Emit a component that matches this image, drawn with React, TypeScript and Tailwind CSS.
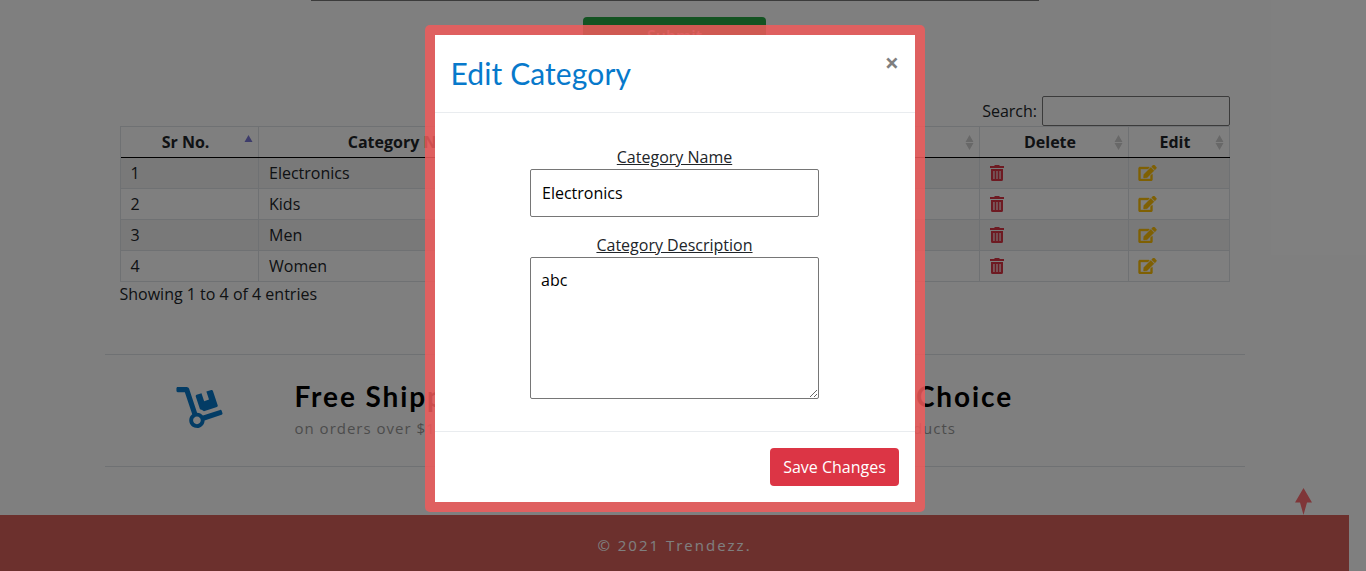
import React from "react";
import { FaDolly, FaEdit } from "react-icons/fa";

const rows = ["Electronics", "Kids", "Men", "Women"];

function TrashIcon() {
  return (
    <svg className="h-4 w-[14px]" viewBox="0 0 14 16" fill="#dc3545">
      <path d="M5 0h4l1 1h4v2H0V1h4z" />
      <path
        fillRule="evenodd"
        d="M1 4h12v10.5a1.5 1.5 0 0 1-1.5 1.5h-9A1.5 1.5 0 0 1 1 14.5zM3.4 6v8h1.1V6zM6.45 6v8h1.1V6zM9.5 6v8h1.1V6z"
      />
    </svg>
  );
}

function SortIcon({ active = false }: { active?: boolean }) {
  return (
    <svg className="h-[15px] w-[9px] shrink-0" viewBox="0 0 9 15">
      {active ? (
        <path d="M4.5 0 8.5 7h-8z" fill="#7b79d6" />
      ) : (
        <path d="M4.5 0 8.5 7h-8zM4.5 15 8.5 8h-8z" fill="#d0d0d0" />
      )}
    </svg>
  );
}

function HeaderCell({ label, active = false }: { label?: string; active?: boolean }) {
  return (
    <div className="flex items-center border-r border-[#dee2e6] pl-[6px] pr-[5px]">
      <span className="flex-1 text-center font-bold">{label}</span>
      <SortIcon active={active} />
    </div>
  );
}

const columns = "grid grid-cols-[138px_310px_411px_149px_101px]";
const cell = "flex items-center border-r border-[#dee2e6] pl-[10px]";

function CategoryTable() {
  return (
    <div className="ml-[120px] w-[1110px] border-l border-t border-[#dee2e6]">
      <div className={`${columns} h-[31px] border-b border-black`}>
        <HeaderCell label="Sr No." active />
        <HeaderCell label="Category Name" />
        <HeaderCell />
        <HeaderCell label="Delete" />
        <HeaderCell label="Edit" />
      </div>
      {rows.map((name, i) => (
        <div
          key={name}
          className={`${columns} h-[31px] border-b border-[#dee2e6] ${i % 2 === 0 ? "bg-[#f2f2f2]" : ""}`}
        >
          <div className="flex items-center border-r border-[#dee2e6] pl-[9.5px]">{i + 1}</div>
          <div className={cell}>{name}</div>
          <div className={cell} />
          <div className={cell}>
            <TrashIcon />
          </div>
          <div className="flex items-center border-r border-[#dee2e6] pl-[9px]">
            <FaEdit className="h-4 w-[19px] stroke-[#ffc107] stroke-[12] text-[#ffc107]" />
          </div>
        </div>
      ))}
    </div>
  );
}

function Page() {
  return (
    <div className="flex h-[571px] w-[1349px] flex-col text-[#212529]">
      <div className="ml-[311px] h-px w-[728px] shrink-0 bg-[#767676]" />
      <button className="ml-[583px] mt-4 h-[38px] w-[183px] shrink-0 rounded bg-[#28a745] font-semibold text-white">
        Submit
      </button>
      <div className="mt-[41px] flex h-[30px] w-[1230px] shrink-0 items-center justify-end gap-[5px]">
        <span>Search:</span>
        <input className="h-[30px] w-[188px] rounded-[2px] border border-[#767676] bg-white" />
      </div>
      <CategoryTable />
      <p className="ml-[119.5px] h-6 leading-6">Showing 1 to 4 of 4 entries</p>
      <section className="ml-[105px] mt-12 flex h-[113px] w-[1140px] shrink-0 border-y border-[#dee2e6]">
        <div className="flex w-[570px]">
          <FaDolly className="ml-[71px] mt-[32px] h-[41px] w-[47px] text-[#0779cb]" />
          <div className="ml-[71.5px] mt-[21px]">
            <h3 className="font-[Lato] text-[28px] font-bold leading-[40px] tracking-[1.9px] text-black">Free Shipping</h3>
            <p className="pt-px text-[15px] leading-[23px] tracking-[1px] text-[#999]">on orders over $100</p>
          </div>
        </div>
        <div className="w-[570px]">
          <div className="mt-[21px] w-[338px] text-right">
            <h3 className="font-[Lato] text-[28px] font-bold leading-[40px] tracking-[1.9px] text-black">Choice</h3>
            <p className="mr-[57px] pt-px text-[15px] leading-[23px] tracking-[1px] text-[#999]">products</p>
          </div>
        </div>
      </section>
      <div className="flex h-[48px] shrink-0 justify-end pr-[37px] pt-[21px]">
        <svg className="h-[27px] w-[17px]" viewBox="0 0 17 27">
          <path d="M8.5 0 17 14.5h-5L8.5 27 5 14.5H0z" fill="#ff6c70" />
        </svg>
      </div>
      <footer className="flex h-[56px] shrink-0 items-center justify-center bg-[#d8605b] pt-[5px] text-[15px] tracking-[2px] text-white">
        © 2021 Trendezz.
      </footer>
    </div>
  );
}

function EditModal() {
  return (
    <div className="flex h-[487px] w-[500px] flex-col rounded-[5px] border-[10px] border-[rgba(240,90,90,0.85)] bg-white bg-clip-padding text-[#212529]">
      <div className="flex h-[78px] shrink-0 items-start justify-between border-b border-[#e9ecef] pl-[15.5px] pr-4">
        <h2 className="pt-[19px] font-[Lato] text-[30px] leading-[38px] tracking-[0.1px] text-[#0779cb]">
          Edit Category
        </h2>
        <button className="pt-[15px] text-[25px] font-bold leading-6 text-black/50">×</button>
      </div>
      <div className="flex h-[319px] shrink-0 flex-col items-center border-b border-[#e9ecef] pr-px pt-[32px]">
        <label className="h-6 leading-6 underline">Category Name</label>
        <input
          defaultValue="Electronics"
          className="h-[48px] w-[289px] rounded-[2px] border border-[#767676] px-[11px] text-black"
        />
        <label className="mt-4 h-6 leading-6 underline">Category Description</label>
        <textarea
          defaultValue="abc"
          className="h-[142px] w-[289px] resize rounded-[2px] border border-[#767676] p-[10px] leading-6 text-black"
        />
      </div>
      <div className="flex justify-end p-4">
        <button className="h-[38px] w-[129px] rounded bg-[#dc3545] text-white">Save Changes</button>
      </div>
    </div>
  );
}

export default function App() {
  return (
    <div className="relative h-[571px] w-[1366px] overflow-hidden bg-white font-['Open_Sans',sans-serif] text-[16px]">
      <Page />
      <div className="absolute inset-0 flex items-start justify-center bg-black/50 pr-[16px] pt-[25px]">
        <EditModal />
      </div>
    </div>
  );
}
